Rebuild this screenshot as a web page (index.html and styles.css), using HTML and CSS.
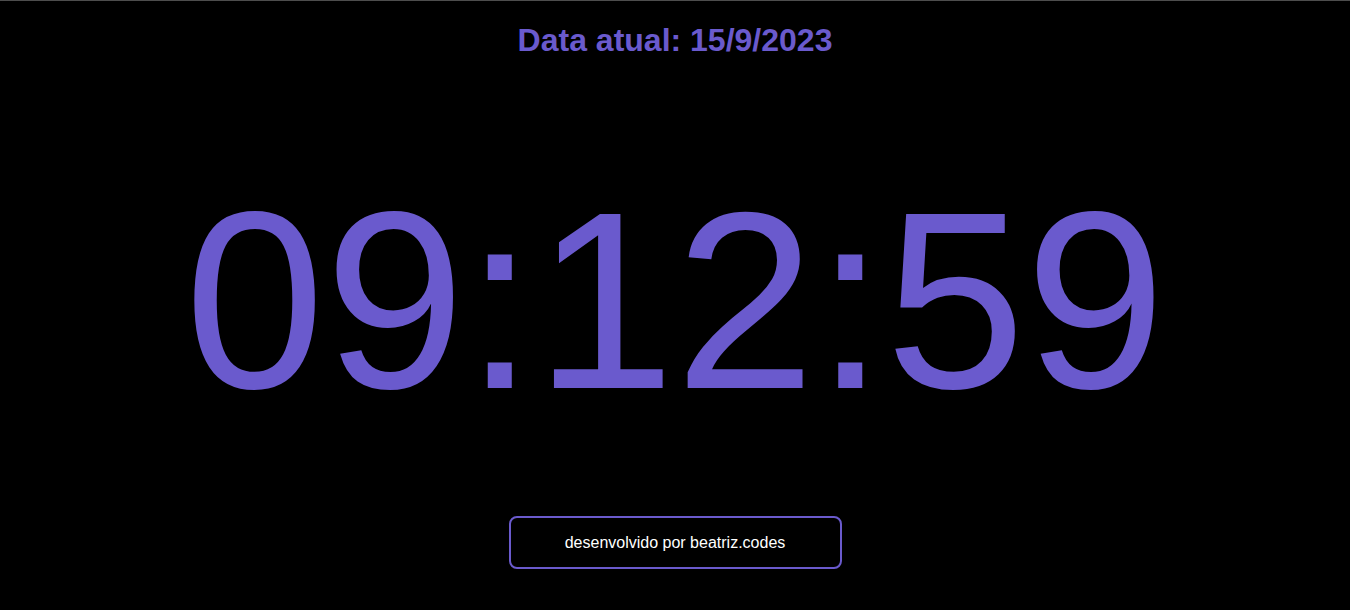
FILE: index.html
```html
<!DOCTYPE html>
<html lang="pt-BR">
<head>
<meta charset="utf-8">
<title>Relógio</title>
<link rel="stylesheet" href="styles.css">
</head>
<body>
<main class="page">
  <h1 class="date">Data atual: 15/9/2023</h1>
  <div class="clock">09:12:59</div>
  <footer class="credit">desenvolvido por beatriz.codes</footer>
</main>
</body>
</html>
```

FILE: styles.css
```css
html, body {
  margin: 0;
  padding: 0;
  background: #000;
}
body {
  border-top: 1px solid #4d4d4d;
  height: 609px;
  overflow: hidden;
  font-family: "Liberation Sans", Arial, sans-serif;
}
.page {
  display: flex;
  flex-direction: column;
  align-items: center;
}
.date {
  margin: 21px 0 0;
  font-size: 32px;
  line-height: 37px;
  font-weight: bold;
  color: #6a5acd;
}
.clock {
  margin-top: 95px;
  font-size: 252px;
  line-height: 294px;
  color: #6a5acd;
}
.credit {
  margin-top: 68px;
  box-sizing: border-box;
  width: 333px;
  height: 53px;
  border: 2px solid #6a5acd;
  border-radius: 8px;
  display: flex;
  align-items: center;
  justify-content: center;
  color: #fff;
  font-size: 16px;
}
```
